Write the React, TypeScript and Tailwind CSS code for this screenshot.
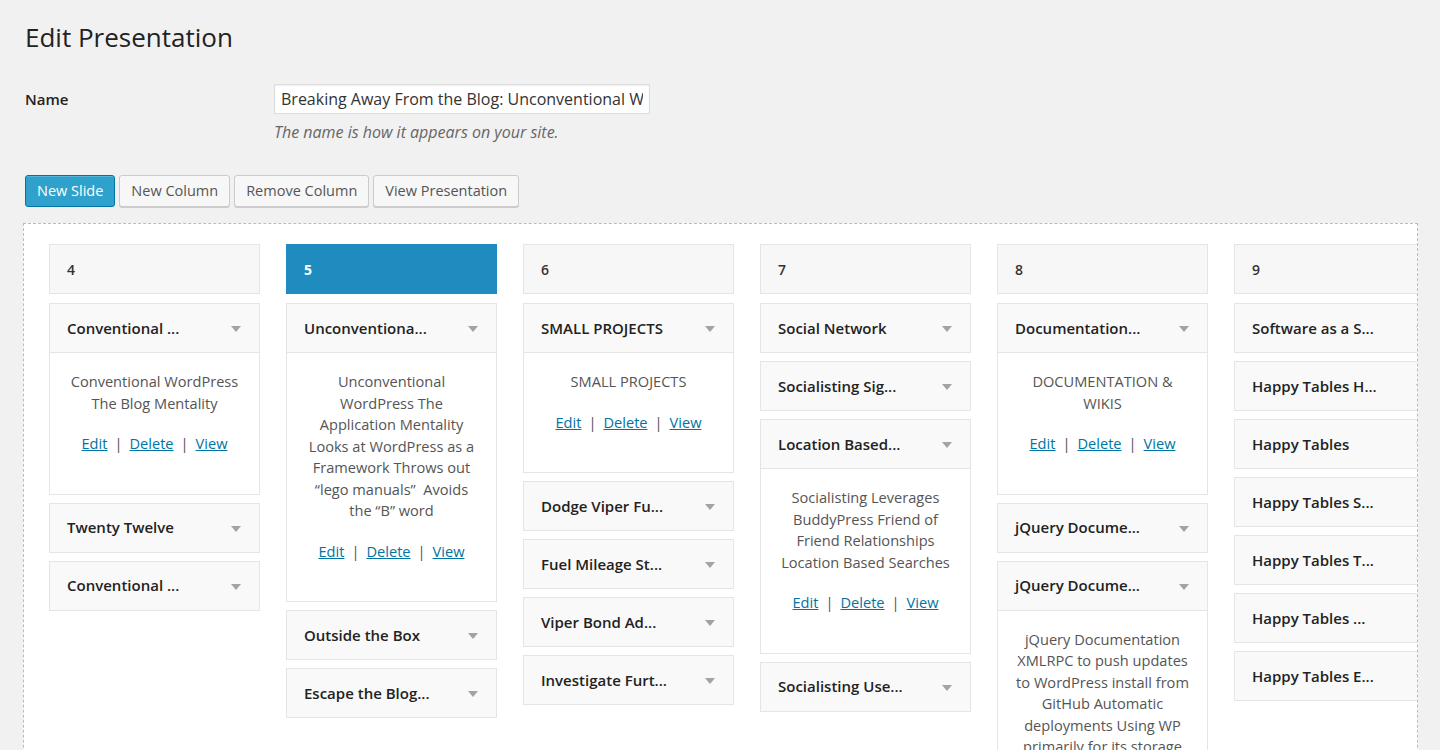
import React from "react";

type Slide = {
  title: string;
  lines?: string[];
};

type Column = {
  num: string;
  active?: boolean;
  slides: Slide[];
};

const columns: Column[] = [
  {
    num: "4",
    slides: [
      { title: "Conventional ...", lines: ["Conventional WordPress", "The Blog Mentality"] },
      { title: "Twenty Twelve" },
      { title: "Conventional ..." },
    ],
  },
  {
    num: "5",
    active: true,
    slides: [
      {
        title: "Unconventiona...",
        lines: [
          "Unconventional",
          "WordPress The",
          "Application Mentality",
          "Looks at WordPress as a",
          "Framework Throws out",
          "\u201clego manuals\u201d\u00a0 Avoids",
          "the \u201cB\u201d word",
        ],
      },
      { title: "Outside the Box" },
      { title: "Escape the Blog..." },
    ],
  },
  {
    num: "6",
    slides: [
      { title: "SMALL PROJECTS", lines: ["SMALL PROJECTS"] },
      { title: "Dodge Viper Fu..." },
      { title: "Fuel Mileage St..." },
      { title: "Viper Bond Ad..." },
      { title: "Investigate Furt..." },
    ],
  },
  {
    num: "7",
    slides: [
      { title: "Social Network" },
      { title: "Socialisting Sig..." },
      {
        title: "Location Based...",
        lines: ["Socialisting Leverages", "BuddyPress Friend of", "Friend Relationships", "Location Based Searches"],
      },
      { title: "Socialisting Use..." },
    ],
  },
  {
    num: "8",
    slides: [
      { title: "Documentation...", lines: ["DOCUMENTATION &", "WIKIS"] },
      { title: "jQuery Docume..." },
      {
        title: "jQuery Docume...",
        lines: [
          "jQuery Documentation",
          "XMLRPC to push updates",
          "to WordPress install from",
          "GitHub Automatic",
          "deployments Using WP",
          "primarily for its storage",
          "engine",
        ],
      },
    ],
  },
  {
    num: "9",
    slides: [
      { title: "Software as a S..." },
      { title: "Happy Tables H..." },
      { title: "Happy Tables" },
      { title: "Happy Tables S..." },
      { title: "Happy Tables T..." },
      { title: "Happy Tables ..." },
      { title: "Happy Tables E..." },
    ],
  },
];

function SlideCard({ slide }: { slide: Slide }) {
  return (
    <div className="border border-[#e5e5e5] bg-white">
      <div className="h-[48px] bg-[#f9f9f9] flex items-center justify-between pl-[17px] pr-[18px]">
        <span className="text-[15px] font-semibold text-[#222] whitespace-nowrap">{slide.title}</span>
        <span className="w-0 h-0 border-l-[5px] border-r-[5px] border-t-[6px] border-l-transparent border-r-transparent border-t-[#a3a3a3] mt-[2px]" />
      </div>
      {slide.lines && (
        <div className="border-t border-[#e5e5e5] pt-[18px] pb-[39px] text-center text-[14.6px] leading-[21.5px] text-[#555]">
          {slide.lines.map((line, i) => (
            <div key={i} className="whitespace-nowrap">
              {line}
            </div>
          ))}
          <div className="mt-[19px]">
            <a href="#" className="text-[#0074a2] underline">Edit</a>
            <span className="mx-[7px]">|</span>
            <a href="#" className="text-[#0074a2] underline">Delete</a>
            <span className="mx-[7px]">|</span>
            <a href="#" className="text-[#0074a2] underline">View</a>
          </div>
        </div>
      )}
    </div>
  );
}

export default function App() {
  return (
    <div
      className="h-[750px] overflow-hidden bg-[#f1f1f1] pl-[23px] pr-[22px] pt-[17px] text-[#444]"
      style={{ fontFamily: '"Open Sans", "Liberation Sans", sans-serif' }}
    >
      <h2 className="pl-[2px] text-[26px] leading-[40px] text-[#222]">Edit Presentation</h2>

      <div className="mt-[27px] pl-[2px] flex">
        <label className="w-[249px] text-[15px] font-semibold text-[#222] leading-[30px]">Name</label>
        <div>
          <input
            type="text"
            readOnly
            value="Breaking Away From the Blog: Unconventional WordPress"
            className="w-[376px] h-[30px] border border-[#ddd] bg-white px-[6px] text-[16px] text-[#333] shadow-[inset_0_1px_2px_rgba(0,0,0,0.07)] outline-none"
          />
          <p className="mt-[8px] text-[16px] italic text-[#666] leading-[20px]">The name is how it appears on your site.</p>
        </div>
      </div>

      <div className="mt-[33px] pl-[2px] flex gap-[4px]">
        <button className="h-[32px] px-[11px] rounded-[3px] border border-[#0074a2] bg-[#2ea2cc] text-white text-[14.5px] shadow-[inset_0_1px_0_rgba(120,200,230,0.5)]">
          New Slide
        </button>
        {["New Column", "Remove Column", "View Presentation"].map((label) => (
          <button
            key={label}
            className="h-[32px] px-[11px] rounded-[3px] border border-[#ccc] bg-[#f7f7f7] text-[#555] text-[14.5px] shadow-[0_1px_0_#ccc]"
          >
            {label}
          </button>
        ))}
      </div>

      <div className="mt-[16px] h-[600px] overflow-hidden border border-dashed border-[#bbb] bg-white pl-[25px] pt-[20px]">
        <div className="flex gap-[26px]">
          {columns.map((col) => (
            <div key={col.num} className="w-[211px] shrink-0">
              <div
                className={
                  col.active
                    ? "h-[50px] flex items-center pl-[17px] border border-[#1e8cbe] bg-[#1e8cbe] text-white text-[14px] font-bold"
                    : "h-[50px] flex items-center pl-[17px] border border-[#e5e5e5] bg-[#f7f7f7] text-[#333] text-[14px] font-semibold"
                }
              >
                {col.num}
              </div>
              <div className="mt-[9px] flex flex-col gap-[8px]">
                {col.slides.map((s, i) => (
                  <SlideCard key={i} slide={s} />
                ))}
              </div>
            </div>
          ))}
        </div>
      </div>
    </div>
  );
}
